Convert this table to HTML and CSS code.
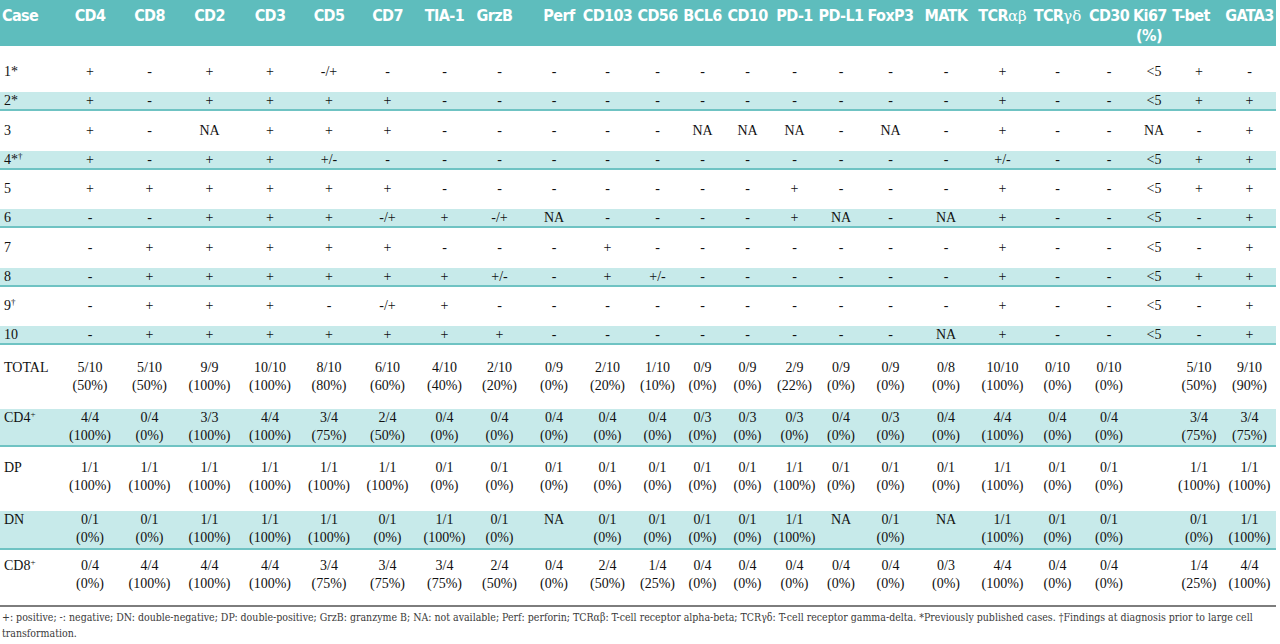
FILE: index.html
```html
<!DOCTYPE html>
<html lang="en">
<head>
<meta charset="utf-8">
<title>Immunophenotype table</title>
<link rel="stylesheet" href="styles.css">
</head>
<body>
<table class="tbl">
<colgroup>
<col style="width:60px"><col style="width:60px"><col style="width:59px"><col style="width:61px"><col style="width:60px"><col style="width:58px"><col style="width:59px"><col style="width:55px"><col style="width:55px"><col style="width:54px"><col style="width:53px"><col style="width:47px"><col style="width:43px"><col style="width:47px"><col style="width:47px"><col style="width:46px"><col style="width:53px"><col style="width:58px"><col style="width:55px"><col style="width:55px"><col style="width:48px"><col style="width:42px"><col style="width:48px"><col style="width:53px">
</colgroup>
<thead>
<tr class="head">
<th class="case">Case</th><th>CD4</th><th>CD8</th><th>CD2</th><th>CD3</th><th>CD5</th><th>CD7</th><th>TIA-1</th><th class="h-grzb"><div>GrzB</div></th><th class="h-perf"><div>Perf</div></th><th>CD103</th><th>CD56</th><th>BCL6</th><th>CD10</th><th>PD-1</th><th>PD-L1</th><th>FoxP3</th><th>MATK</th><th>TCR<span class="greek">αβ</span></th><th>TCR<span class="greek">γδ</span></th><th>CD30</th><th class="h-ki"><div>Ki67<br>(%)</div></th><th class="h-tbet"><div>T-bet</div></th><th>GATA3</th>
</tr>
</thead>
<tbody>
<tr class="w first"><th>1*</th><td>+</td><td>-</td><td>+</td><td>+</td><td>-/+</td><td>-</td><td>-</td><td>-</td><td>-</td><td>-</td><td>-</td><td>-</td><td>-</td><td>-</td><td>-</td><td>-</td><td>-</td><td>+</td><td>-</td><td>-</td><td>&lt;5</td><td>+</td><td>-</td></tr>
<tr class="s"><th>2*</th><td>+</td><td>-</td><td>+</td><td>+</td><td>+</td><td>+</td><td>-</td><td>-</td><td>-</td><td>-</td><td>-</td><td>-</td><td>-</td><td>-</td><td>-</td><td>-</td><td>-</td><td>+</td><td>-</td><td>-</td><td>&lt;5</td><td>+</td><td>+</td></tr>
<tr class="w"><th>3</th><td>+</td><td>-</td><td>NA</td><td>+</td><td>+</td><td>+</td><td>-</td><td>-</td><td>-</td><td>-</td><td>-</td><td>NA</td><td>NA</td><td>NA</td><td>-</td><td>NA</td><td>-</td><td>+</td><td>-</td><td>-</td><td>NA</td><td>-</td><td>+</td></tr>
<tr class="s"><th>4*<sup>†</sup></th><td>+</td><td>-</td><td>+</td><td>+</td><td>+/-</td><td>-</td><td>-</td><td>-</td><td>-</td><td>-</td><td>-</td><td>-</td><td>-</td><td>-</td><td>-</td><td>-</td><td>-</td><td>+/-</td><td>-</td><td>-</td><td>&lt;5</td><td>+</td><td>+</td></tr>
<tr class="w"><th>5</th><td>+</td><td>+</td><td>+</td><td>+</td><td>+</td><td>+</td><td>-</td><td>-</td><td>-</td><td>-</td><td>-</td><td>-</td><td>-</td><td>+</td><td>-</td><td>-</td><td>-</td><td>+</td><td>-</td><td>-</td><td>&lt;5</td><td>+</td><td>+</td></tr>
<tr class="s"><th>6</th><td>-</td><td>-</td><td>+</td><td>+</td><td>+</td><td>-/+</td><td>+</td><td>-/+</td><td>NA</td><td>-</td><td>-</td><td>-</td><td>-</td><td>+</td><td>NA</td><td>-</td><td>NA</td><td>+</td><td>-</td><td>-</td><td>&lt;5</td><td>-</td><td>+</td></tr>
<tr class="w"><th>7</th><td>-</td><td>+</td><td>+</td><td>+</td><td>+</td><td>+</td><td>-</td><td>-</td><td>-</td><td>+</td><td>-</td><td>-</td><td>-</td><td>-</td><td>-</td><td>-</td><td>-</td><td>+</td><td>-</td><td>-</td><td>&lt;5</td><td>-</td><td>+</td></tr>
<tr class="s"><th>8</th><td>-</td><td>+</td><td>+</td><td>+</td><td>+</td><td>+</td><td>+</td><td>+/-</td><td>-</td><td>+</td><td>+/-</td><td>-</td><td>-</td><td>-</td><td>-</td><td>-</td><td>-</td><td>+</td><td>-</td><td>-</td><td>&lt;5</td><td>+</td><td>+</td></tr>
<tr class="w"><th>9<sup>†</sup></th><td>-</td><td>+</td><td>+</td><td>+</td><td>-</td><td>-/+</td><td>+</td><td>-</td><td>-</td><td>-</td><td>-</td><td>-</td><td>-</td><td>-</td><td>-</td><td>-</td><td>-</td><td>+</td><td>-</td><td>-</td><td>&lt;5</td><td>-</td><td>+</td></tr>
<tr class="s"><th>10</th><td>-</td><td>+</td><td>+</td><td>+</td><td>+</td><td>+</td><td>+</td><td>+</td><td>-</td><td>-</td><td>-</td><td>-</td><td>-</td><td>-</td><td>-</td><td>-</td><td>NA</td><td>+</td><td>-</td><td>-</td><td>&lt;5</td><td>-</td><td>+</td></tr>
<tr class="st st-total"><th>TOTAL</th><td>5/10<br>(50%)</td><td>5/10<br>(50%)</td><td>9/9<br>(100%)</td><td>10/10<br>(100%)</td><td>8/10<br>(80%)</td><td>6/10<br>(60%)</td><td>4/10<br>(40%)</td><td>2/10<br>(20%)</td><td>0/9<br>(0%)</td><td>2/10<br>(20%)</td><td>1/10<br>(10%)</td><td>0/9<br>(0%)</td><td>0/9<br>(0%)</td><td>2/9<br>(22%)</td><td>0/9<br>(0%)</td><td>0/9<br>(0%)</td><td>0/8<br>(0%)</td><td>10/10<br>(100%)</td><td>0/10<br>(0%)</td><td>0/10<br>(0%)</td><td></td><td>5/10<br>(50%)</td><td>9/10<br>(90%)</td></tr>
<tr class="st st-cd4 sh"><th>CD4<sup>+</sup></th><td>4/4<br>(100%)</td><td>0/4<br>(0%)</td><td>3/3<br>(100%)</td><td>4/4<br>(100%)</td><td>3/4<br>(75%)</td><td>2/4<br>(50%)</td><td>0/4<br>(0%)</td><td>0/4<br>(0%)</td><td>0/4<br>(0%)</td><td>0/4<br>(0%)</td><td>0/4<br>(0%)</td><td>0/3<br>(0%)</td><td>0/3<br>(0%)</td><td>0/3<br>(0%)</td><td>0/4<br>(0%)</td><td>0/3<br>(0%)</td><td>0/4<br>(0%)</td><td>4/4<br>(100%)</td><td>0/4<br>(0%)</td><td>0/4<br>(0%)</td><td></td><td>3/4<br>(75%)</td><td>3/4<br>(75%)</td></tr>
<tr class="st st-dp"><th>DP</th><td>1/1<br>(100%)</td><td>1/1<br>(100%)</td><td>1/1<br>(100%)</td><td>1/1<br>(100%)</td><td>1/1<br>(100%)</td><td>1/1<br>(100%)</td><td>0/1<br>(0%)</td><td>0/1<br>(0%)</td><td>0/1<br>(0%)</td><td>0/1<br>(0%)</td><td>0/1<br>(0%)</td><td>0/1<br>(0%)</td><td>0/1<br>(0%)</td><td>1/1<br>(100%)</td><td>0/1<br>(0%)</td><td>0/1<br>(0%)</td><td>0/1<br>(0%)</td><td>1/1<br>(100%)</td><td>0/1<br>(0%)</td><td>0/1<br>(0%)</td><td></td><td>1/1<br>(100%)</td><td>1/1<br>(100%)</td></tr>
<tr class="st st-dn sh"><th>DN</th><td>0/1<br>(0%)</td><td>0/1<br>(0%)</td><td>1/1<br>(100%)</td><td>1/1<br>(100%)</td><td>1/1<br>(100%)</td><td>0/1<br>(0%)</td><td>1/1<br>(100%)</td><td>0/1<br>(0%)</td><td>NA</td><td>0/1<br>(0%)</td><td>0/1<br>(0%)</td><td>0/1<br>(0%)</td><td>0/1<br>(0%)</td><td>1/1<br>(100%)</td><td>NA</td><td>0/1<br>(0%)</td><td>NA</td><td>1/1<br>(100%)</td><td>0/1<br>(0%)</td><td>0/1<br>(0%)</td><td></td><td>0/1<br>(0%)</td><td>1/1<br>(100%)</td></tr>
<tr class="st st-cd8 last"><th>CD8<sup>+</sup></th><td>0/4<br>(0%)</td><td>4/4<br>(100%)</td><td>4/4<br>(100%)</td><td>4/4<br>(100%)</td><td>3/4<br>(75%)</td><td>3/4<br>(75%)</td><td>3/4<br>(75%)</td><td>2/4<br>(50%)</td><td>0/4<br>(0%)</td><td>2/4<br>(50%)</td><td>1/4<br>(25%)</td><td>0/4<br>(0%)</td><td>0/4<br>(0%)</td><td>0/4<br>(0%)</td><td>0/4<br>(0%)</td><td>0/4<br>(0%)</td><td>0/3<br>(0%)</td><td>4/4<br>(100%)</td><td>0/4<br>(0%)</td><td>0/4<br>(0%)</td><td></td><td>1/4<br>(25%)</td><td>4/4<br>(100%)</td></tr>
</tbody>
</table>
<p class="note">+: positive; -: negative; DN: double-negative; DP: double-positive; GrzB: granzyme B; NA: not available; Perf: perforin; TCRαβ: T-cell receptor alpha-beta; TCRγδ: T-cell receptor gamma-delta. *Previously published cases. †Findings at diagnosis prior to large cell transformation.</p>
</body>
</html>
```

FILE: styles.css
```css
html, body {
  margin: 0;
  padding: 0;
  background: #ffffff;
}

body {
  font-family: "Liberation Serif", "Times New Roman", serif;
  color: #111111;
  width: 1280px;
}

.tbl {
  width: 1276px;
  table-layout: fixed;
  border-collapse: separate;
  border-spacing: 0;
  font-size: 14px;
}

.tbl th,
.tbl td {
  padding: 0;
  text-align: center;
  white-space: nowrap;
  font-weight: normal;
}

/* header */
.tbl .head th {
  background: #5ebdbd;
  color: #ffffff;
  font-family: "DejaVu Sans Condensed", "Liberation Sans", sans-serif;
  font-weight: bold;
  font-size: 16px;
  line-height: 20px;
  letter-spacing: -0.6px;
  vertical-align: top;
  padding-top: 6px;
}

.head { height: 44px; }

.tbl .head th.case {
  text-align: left;
  padding-left: 2px;
}

.head .greek {
  font-family: "DejaVu Serif", "Liberation Serif", serif;
  font-weight: normal;
  font-size: 15px;
  letter-spacing: 0;
}

.h-grzb div { margin-right: 10px; }
.h-perf div { margin-left: 10px; }
.h-ki div { margin-right: 10px; }
.h-tbet div { margin-left: -6px; margin-right: 10px; }

/* body rows */
.tbl tbody th {
  text-align: left;
  padding-left: 4px;
}

tbody sup {
  font-size: 9px;
  line-height: 0;
  vertical-align: 5px;
}

.w td, .w th,
.s td, .s th {
  vertical-align: middle;
  line-height: 16px;
}

.w { height: 39.5px; }
.w.first { height: 46px; }
.w.first td, .w.first th { padding-top: 5px; }

.s { height: 19px; }

.s td, .s th,
.sh td, .sh th {
  background: #c7eaea;
  border-bottom: 2px solid #6fc3c3;
}

.s td, .s th { padding-top: 1px; }

/* summary rows */
.st td, .st th {
  vertical-align: top;
  line-height: 18px;
}

.st-total { height: 64px; }
.st-total td, .st-total th { padding-top: 14px; }

.st-cd4 { height: 38px; }

.st-dp { height: 64px; }
.st-dp td, .st-dp th { padding-top: 12px; }

.st-dn { height: 39px; }

.st-cd8 { height: 57px; }
.st-cd8 td, .st-cd8 th { padding-top: 7px; }

.last td, .last th {
  border-bottom: 2px solid #7d7d7d;
}

/* footnote */
.note {
  margin: 2px 0 0;
  padding-left: 2px;
  width: 1274px;
  font-family: "DejaVu Serif Condensed", "DejaVu Serif", "Liberation Serif", serif;
  font-size: 10.5px;
  line-height: 16px;
  color: #3a3a3a;
}
```
